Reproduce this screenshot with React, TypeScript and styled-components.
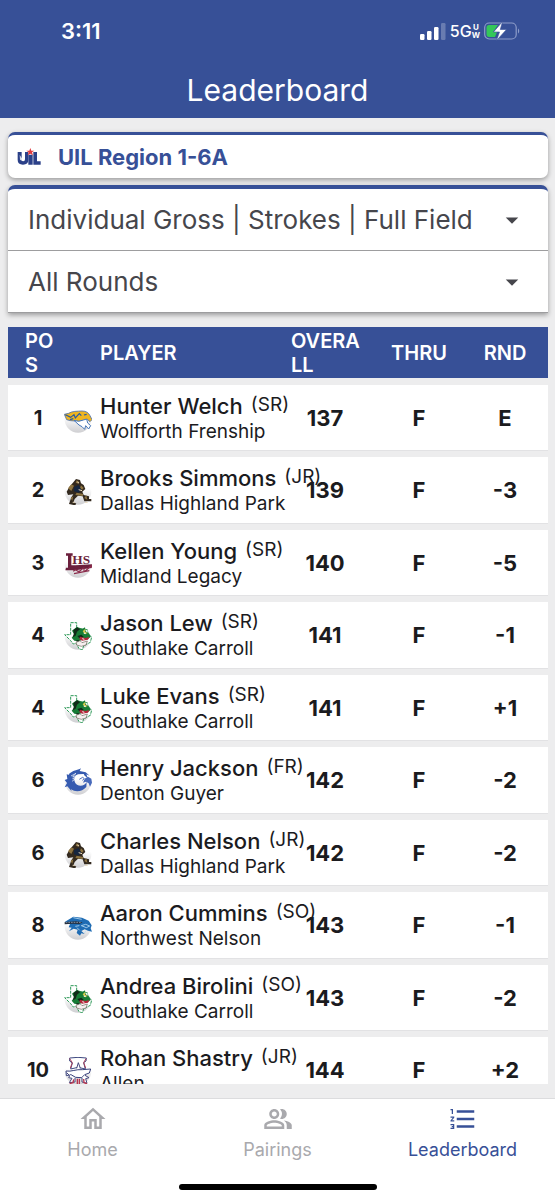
import React from "react";
import styled, { createGlobalStyle } from "styled-components";
import {
  MdArrowDropDown,
  MdFormatListNumbered,
  MdOutlineHome,
  MdOutlinePeopleAlt,
} from "react-icons/md";

const blue = "#375097";
const ink = "#1b1b1e";

const GlobalStyle = createGlobalStyle`
  * { box-sizing: border-box; }
  body {
    margin: 0;
    background: #ededee;
    color: ${ink};
    font-family: Inter, "Liberation Sans", sans-serif;
  }
`;

const Screen = styled.div`
  display: flex;
  flex-direction: column;
  height: 100vh;
`;

const Header = styled.header`
  flex: none;
  background: ${blue};
  color: #fff;
`;

const StatusBar = styled.div`
  display: flex;
  align-items: center;
  justify-content: space-between;
  height: 62px;
  padding: 0 35px 0 61px;
`;

const Clock = styled.time`
  font-size: 22px;
  font-weight: 600;
`;

const Indicators = styled.div`
  display: flex;
  align-items: center;
  gap: 4px;
`;

const Network = styled.span`
  display: flex;
  align-items: center;
  font-size: 16px;
  font-weight: 500;
`;

const Band = styled.span`
  display: flex;
  flex-direction: column;
  align-items: center;
  font-size: 8px;
  font-weight: 700;
  line-height: 8px;
`;

const Title = styled.h1`
  margin: 0;
  height: 56px;
  font-size: 30px;
  font-weight: 400;
  line-height: 56px;
  text-align: center;
`;

const Content = styled.main`
  display: flex;
  flex: 1;
  flex-direction: column;
  gap: 7px;
  min-height: 0;
  padding: 14px 7px 14px 8px;
`;

const EventCard = styled.section`
  display: flex;
  flex: none;
  align-items: center;
  gap: 17px;
  height: 46px;
  padding: 0 9px;
  border-top: 3px solid ${blue};
  border-radius: 7px;
  background: #fff;
  box-shadow: 0 2px 5px rgba(0, 0, 0, 0.35);
`;

const EventName = styled.h2`
  margin: 0;
  color: ${blue};
  font-size: 22px;
  font-weight: 700;
`;

const Filters = styled.form`
  flex: none;
  border-top: 4px solid ${blue};
  border-radius: 7px 7px 0 0;
  background: #fff;
  box-shadow: 0 2px 5px rgba(0, 0, 0, 0.35);
`;

const Field = styled.label`
  display: grid;
  grid-template-columns: 1fr 30px;
  align-items: center;
  height: 62px;
  padding: 0 21px 0 20px;
  border-bottom: 1px solid #9d9d9f;
  color: #46464c;

  svg {
    grid-area: 1 / 2;
    pointer-events: none;
  }
`;

const Picker = styled.select`
  grid-area: 1 / 1 / 2 / 3;
  width: 100%;
  height: 100%;
  padding: 0;
  border: 0;
  appearance: none;
  background: transparent;
  color: inherit;
  font: 400 26px Inter, "Liberation Sans", sans-serif;
`;

const Scroller = styled.div`
  flex: 1;
  min-height: 0;
  overflow: hidden auto;
  scrollbar-width: none;
`;

const Board = styled.table`
  width: 100%;
  table-layout: fixed;
  border-spacing: 0 7px;
`;

const HeadCell = styled.th<{ $width?: number; $inset: number; $center?: boolean }>`
  width: ${(p) => (p.$width ? `${p.$width}px` : "auto")};
  height: 51px;
  padding: 0 ${(p) => (p.$center ? 0 : 10)}px 0 ${(p) => p.$inset}px;
  background: ${blue};
  color: #fff;
  font-size: 20px;
  font-weight: 600;
  line-height: 24px;
  text-align: ${(p) => (p.$center ? "center" : "left")};
  word-break: break-all;
`;

const Row = styled.tr`
  height: 65px;
  background: #fff;
  box-shadow: 0 1px 0 #e2e2e4;

  &:nth-child(even) {
    height: 66px;
  }
`;

const Position = styled.td`
  padding: 0 0 0 4px;
  font-size: 20px;
  font-weight: 700;
  text-align: center;
`;

const Score = styled.td`
  padding: 0;
  font-size: 22px;
  font-weight: 700;
  text-align: center;
`;

const PlayerCell = styled.td`
  padding: 0;
  white-space: nowrap;
`;

const Player = styled.div`
  display: flex;
  align-items: center;
  gap: 8px;
  padding-top: 2px;
`;

const LogoMark = styled.svg`
  flex: none;
`;

const NameLine = styled.div`
  display: flex;
  align-items: flex-start;
  gap: 8px;
  height: 26px;
`;

const PlayerName = styled.span`
  font-size: 22px;
  font-weight: 500;
  line-height: 26px;
`;

const Grade = styled.span`
  font-size: 19px;
  line-height: 24px;
`;

const School = styled.div`
  font-size: 19px;
  line-height: 26px;
`;

const TabBar = styled.footer`
  display: flex;
  flex: none;
  flex-direction: column;
  align-items: center;
  justify-content: space-between;
  height: 102px;
  padding-bottom: 10px;
  border-top: 1px solid #dcdcde;
  background: #fff;
`;

const Tabs = styled.nav`
  display: grid;
  grid-template-columns: repeat(3, 1fr);
  width: 100%;
`;

const Tab = styled.a<{ $active?: boolean }>`
  display: flex;
  flex-direction: column;
  align-items: center;
  gap: 4px;
  padding-top: 5px;
  color: ${(p) => (p.$active ? blue : "#a9a9ad")};
  font-size: 18px;
  line-height: 24px;
  text-decoration: none;
`;

const HomeIndicator = styled.div`
  width: 198px;
  height: 6px;
  border-radius: 3px;
  background: #000;
`;

const Signal = () => (
  <svg width="26" height="17" viewBox="0 0 26 17" fill="#fff" aria-hidden="true">
    <rect x="0" y="11" width="4.500" height="6" rx="1.2" />
    <rect x="7" y="8" width="4.500" height="9" rx="1.2" />
    <rect x="14" y="4" width="4.500" height="13" rx="1.2" />
    <rect x="21" y="0" width="4.500" height="17" rx="1.2" opacity="0.25" />
  </svg>
);

const Battery = () => (
  <svg width="36" height="20" viewBox="0 0 36 20" aria-hidden="true">
    <rect x="0.7" y="2" width="31.5" height="16" rx="4.5" fill="none" stroke="#8d9cc9" strokeWidth="1.2" />
    <path d="M34 7.5c1.6.8 1.6 4.200 0 5z" fill="#8d9cc9" />
    <path d="M5 4h9L9 11h4l-2 5H5c-1.500 0-2.500-1-2.500-2.500v-7C2.500 5 3.500 4 5 4z" fill="#34c759" />
    <path d="M18.500 .5 9.500 11h6l-3 8.500L22.500 8.500h-6.200z" fill="#fff" stroke={blue} strokeWidth="0.6" />
  </svg>
);

const UilLogo = () => (
  <LogoMark width="24" height="18" viewBox="0 0 72 54" aria-hidden="true">
    <path d="M2 12h12v22q0 6 5 6t5-6V12h10v24q0 14-16 14T2 36z" fill="#2b4088" />
    <path d="M34 20h13v30H34zM49 12h11v28h11v10H49z" fill="#2b4088" />
    <path d="M8 20l6 10 8 2-5 8-8-5z" fill="#fff" opacity=".8" />
    <path d="m40 0 3 8h9l-7 5 3 9-8-5-8 5 3-9-7-5h9z" fill="#e03a3e" />
  </LogoMark>
);

type Team = "frenship" | "highland" | "legacy" | "carroll" | "guyer" | "nelson" | "allen";

const marks: Record<Team, React.ReactNode> = {
  frenship: (
    <>
      <path d="M1 28 14 25C24 18 40 19 54 18c12 0 20 5 24 14l6 12-6 6-8-7-12 3-12 3-12-1-14-1L8 44z" fill="#efb51f" stroke="#496fae" strokeWidth="2.500" />
      <path d="M4 29l16 8 10-8 4 10 12-13 6 6M18 44l10-3M60 30l8-2" fill="none" stroke="#2559a5" strokeWidth="3.500" />
      <path d="M30 46l14 3 14-4 10-3 3 12 9 8-6 10-9-10-3 11-8-8-9-5z" fill="#fff" stroke="#4777b8" strokeWidth="3" />
    </>
  ),
  highland: (
    <>
      <path d="M28 16l8-10 12 3 3 10 8 5 5 12-9 8 4 10 16 4v8h7v7H61l-5-15-14-2-10 10-3 8 8 6-4 5-18-4 7-20 6-9-16 2-4-10 8-14z" fill="#33291e" />
      <path d="M12 34l10-12 8 4-8 16zM38 10l8 5-3 5-8-3zM51 25l8 8-5 5-6-5zM38 47l20 4-2 6-22-3zM20 64l8-7-3 14zM61 63l6-8 3 13z" fill="#8d7340" />
      <path d="M30 30l14-6 8 14-8 9-14-4z" fill="#15253f" />
      <path d="M40 15l5 3M44 38l10 3M26 76h7M63 76h8" fill="none" stroke="#e6d6b8" strokeWidth="3" />
    </>
  ),
  legacy: (
    <>
      <path d="M6 10h20v7h-4v29h12l50-3-2 11-48 7H4l2-8h6V17H6z" fill="#6b1f3c" />
      <text x="25" y="42" fill="#6b1f3c" fontFamily="Liberation Serif" fontSize="40" fontWeight="700">HS</text>
      <path d="M28 64q6-8 11-2t14-4 7 1 14-5 6 0M30 71l46-9" fill="none" stroke="#8a2a4a" strokeWidth="3.500" />
    </>
  ),
  carroll: (
    <>
      <path d="M20 2h18v16l12 3 20 2 3 14 10 8-4 16-20 10-4 13-10-4-8-16-9 2-8-10L2 38h18z" fill="#fff" stroke="#2f9a59" strokeWidth="3" strokeDasharray="9 3" />
      <path d="M24 26l14-11 18 5 7-4 2 12 11 7 4 10-9 7-14-2-10 8-16-2-8-9 8-9z" fill="#177c36" />
      <path d="M28 24l12-8 8 6-9 7-4 12-9 5 4-12zM40 42l12-4 7 6-13 5zM34 56l10-2 3 8z" fill="#102a18" />
      <path d="M56 28l8-8-1 9 8 4-8 3z" fill="#d8c84b" />
      <path d="M48 44l16 4 12-3-4 8-18 3-8-5z" fill="#b5263a" />
      <path d="M36 61l12-5 6 6 16-5-4 12-14 4-14-4z" fill="#f5eeee" stroke="#6b6258" strokeWidth="2" />
      <path d="M59 33l6 2M55 50l6 2" stroke="#fff" strokeWidth="3" />
    </>
  ),
  guyer: (
    <>
      <path d="M14 22C26 10 40 10 51 4l-4 8 18 4 12 10-10-4 5 12-10-8-3-5-17 1c-13 5-15 23-3 31 11 7 24 2 29-8l-1 15c-12 14-32 17-46 7l2 6-13-15-8 3 7-13-7-9 8-3-2-14 8 2z" fill="#365bb0" />
      <path d="M21 27l15-8-10 10 13-3-13 9 8 1-10 7" fill="none" stroke="#fff" strokeWidth="2" />
      <path d="M64 34l8-5 10 6 2 12-6 12-4-10-8-5-9 3 3-7z" fill="#486abb" />
      <path d="M46 37l10-6 5 4-6 5" fill="none" stroke="#486abb" strokeWidth="3" />
    </>
  ),
  nelson: (
    <>
      <path d="M3 29l25-15 26 3 20 9 9 14-3 9 4 10-12-3-10-4-10 5 10 9-10-2-4 7-10-8 3-10-12-3-14 8 8-11-9-1 4-10z" fill="#1f6cb4" />
      <path d="M2 30l34-2 20 3-10 5-20-1-24 2z" fill="#26303f" />
      <path d="M28 17l25 5M52 41l13-4 12 5-10 5zM39 47l8 8M61 63l6-8M34 43l12-2" fill="none" stroke="#b9dcf3" strokeWidth="2.500" />
      <path d="M5 31h48" stroke="#8190a4" strokeWidth="3" strokeDasharray="5 3" />
    </>
  ),
  allen: (
    <>
      <path d="M17 3l25-2 25 2-1 9-7 5 5 19-22-5-22 5 5-18-8-6z" fill="#fff" stroke="#3d477f" strokeWidth="3" />
      <path d="M17 5l8 12-6 16M66 5l-7 12 6 16" fill="none" stroke="#ad3d59" strokeWidth="3" />
      <path d="M6 42c16 3 30-6 49-4l25-2-4 12-14 5-9 9-18-1-14-8-14 3z" fill="#fff" stroke="#39427c" strokeWidth="3" />
      <path d="M8 47l9 9-3 6 10 2-8 13 17-2V63M54 62v13l15 4-4-14 10-3-12-7M38 34l5-17 6 17" fill="#fff" stroke="#44477d" strokeWidth="3" />
      <path d="M29 67l-2 10-10 3M40 65v18M46 65v18M59 66l1 11 9 3" fill="none" stroke="#b8344d" strokeWidth="4" />
    </>
  ),
};

const TeamLogo = ({ team }: { team: Team }) => (
  <LogoMark width="28" height="28" viewBox="0 0 84 84" aria-hidden="true">
    <defs>
      <linearGradient id={`ball-${team}`} x1="0" y1="0" x2="0" y2="1">
        <stop offset="0.4" stopColor="#fff" />
        <stop offset="1" stopColor="#cfcfd2" />
      </linearGradient>
    </defs>
    <circle cx="42" cy="43" r="40" fill={`url(#ball-${team})`} />
    {marks[team]}
  </LogoMark>
);

type Entry = [string, string, string, string, Team, string, string];

const entries: Entry[] = [
  ["1", "Hunter Welch", "SR", "Wolfforth Frenship", "frenship", "137", "E"],
  ["2", "Brooks Simmons", "JR", "Dallas Highland Park", "highland", "139", "-3"],
  ["3", "Kellen Young", "SR", "Midland Legacy", "legacy", "140", "-5"],
  ["4", "Jason Lew", "SR", "Southlake Carroll", "carroll", "141", "-1"],
  ["4", "Luke Evans", "SR", "Southlake Carroll", "carroll", "141", "+1"],
  ["6", "Henry Jackson", "FR", "Denton Guyer", "guyer", "142", "-2"],
  ["6", "Charles Nelson", "JR", "Dallas Highland Park", "highland", "142", "-2"],
  ["8", "Aaron Cummins", "SO", "Northwest Nelson", "nelson", "143", "-1"],
  ["8", "Andrea Birolini", "SO", "Southlake Carroll", "carroll", "143", "-2"],
  ["10", "Rohan Shastry", "JR", "Allen", "allen", "144", "+2"],
];

export default function App() {
  return (
    <Screen>
      <GlobalStyle />
      <Header>
        <StatusBar>
          <Clock>3:11</Clock>
          <Indicators>
            <Signal />
            <Network>
              5G
              <Band>
                <span>U</span>
                <span>W</span>
              </Band>
            </Network>
            <Battery />
          </Indicators>
        </StatusBar>
        <Title>Leaderboard</Title>
      </Header>

      <Content>
        <EventCard>
          <UilLogo />
          <EventName>UIL Region 1-6A</EventName>
        </EventCard>

        <Filters>
          <Field>
            <Picker aria-label="Leaderboard view">
              <option>Individual Gross | Strokes | Full Field</option>
            </Picker>
            <MdArrowDropDown size={30} />
          </Field>
          <Field>
            <Picker aria-label="Round">
              <option>All Rounds</option>
            </Picker>
            <MdArrowDropDown size={30} />
          </Field>
        </Filters>

        <Scroller>
          <Board>
            <thead>
              <tr>
                <HeadCell $width={56} $inset={17}>POS</HeadCell>
                <HeadCell $inset={36}>PLAYER</HeadCell>
                <HeadCell $width={102} $inset={17}>OVERALL</HeadCell>
                <HeadCell $width={86} $inset={0} $center>THRU</HeadCell>
                <HeadCell $width={86} $inset={0} $center>RND</HeadCell>
              </tr>
            </thead>
            <tbody>
              {entries.map(([pos, name, grade, school, team, overall, round]) => (
                <Row key={name}>
                  <Position>{pos}</Position>
                  <PlayerCell>
                    <Player>
                      <TeamLogo team={team} />
                      <div>
                        <NameLine>
                          <PlayerName>{name}</PlayerName>
                          <Grade>({grade})</Grade>
                        </NameLine>
                        <School>{school}</School>
                      </div>
                    </Player>
                  </PlayerCell>
                  <Score>{overall}</Score>
                  <Score>F</Score>
                  <Score>{round}</Score>
                </Row>
              ))}
            </tbody>
          </Board>
        </Scroller>
      </Content>

      <TabBar>
        <Tabs>
          <Tab href="#home">
            <MdOutlineHome size={30} />
            Home
          </Tab>
          <Tab href="#pairings">
            <MdOutlinePeopleAlt size={30} />
            Pairings
          </Tab>
          <Tab href="#leaderboard" $active aria-current="page">
            <MdFormatListNumbered size={30} />
            Leaderboard
          </Tab>
        </Tabs>
        <HomeIndicator />
      </TabBar>
    </Screen>
  );
}
